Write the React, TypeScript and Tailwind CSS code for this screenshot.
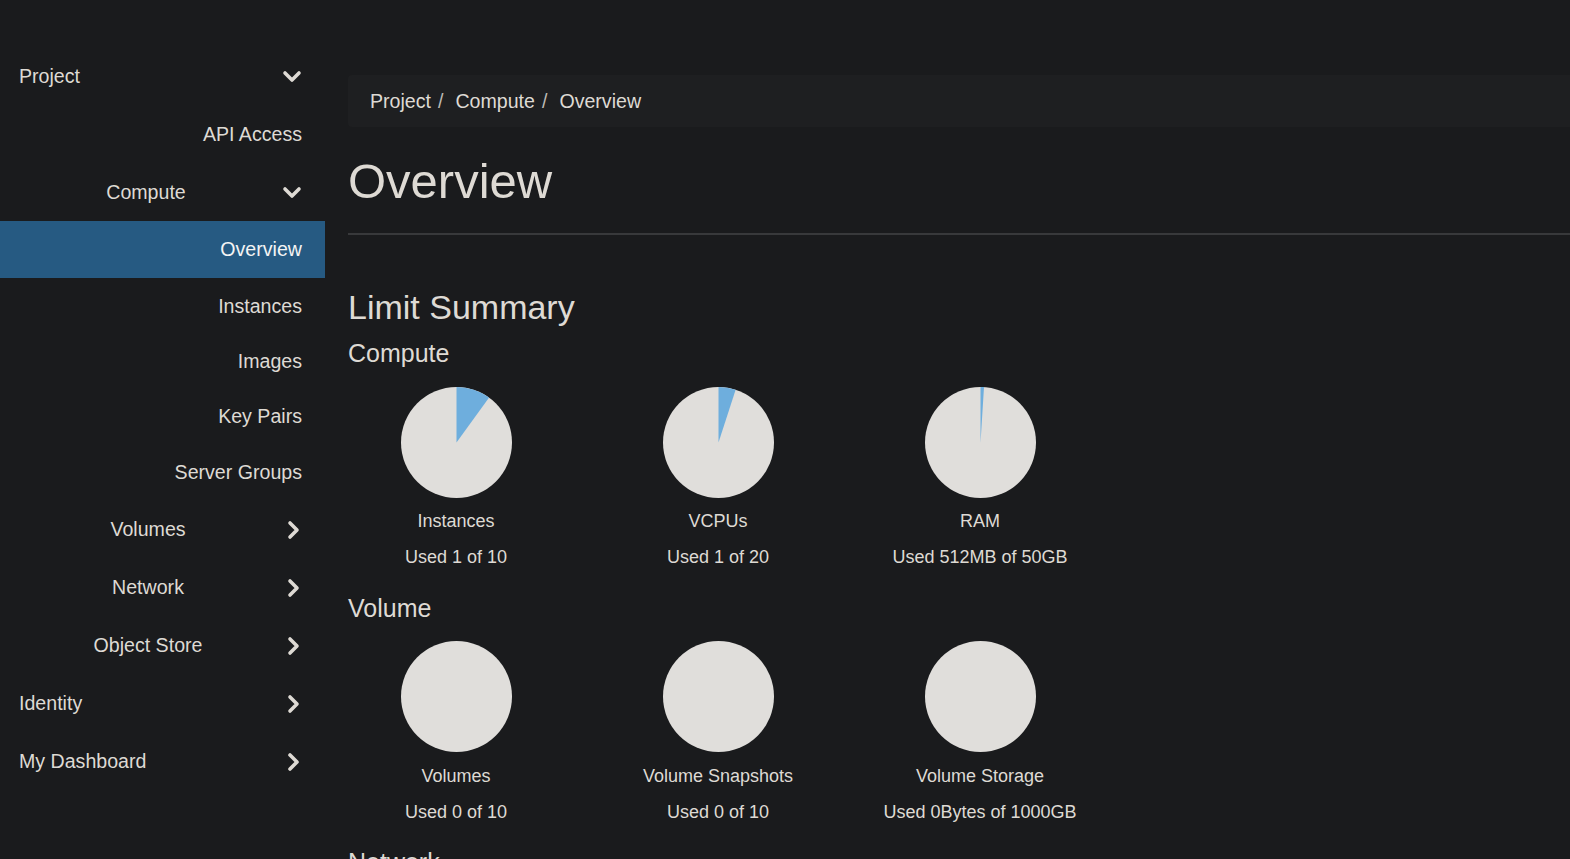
import React from 'react';

const font = "font-['Liberation_Sans',Arial,Helvetica,sans-serif]";

function ChevronDown() {
  return (
    <svg width="20" height="14" viewBox="0 0 20 14" className="shrink-0">
      <polyline points="3,3 10,10 17,3" fill="none" stroke="#dedad4" strokeWidth="3.6" strokeLinecap="round" strokeLinejoin="round" />
    </svg>
  );
}

function ChevronRight() {
  return (
    <svg width="14" height="20" viewBox="0 0 14 20" className="shrink-0 mr-[2px]">
      <polyline points="4,3 11,10 4,17" fill="none" stroke="#dedad4" strokeWidth="3.6" strokeLinecap="round" strokeLinejoin="round" />
    </svg>
  );
}

type Item =
  | { kind: 'top'; label: string; open: boolean; h: string }
  | { kind: 'group'; label: string; open: boolean; h: string }
  | { kind: 'leaf'; label: string; active?: boolean; h: string };

const nav: Item[] = [
  { kind: 'top', label: 'Project', open: true, h: 'h-[58px]' },
  { kind: 'leaf', label: 'API Access', h: 'h-[58px]' },
  { kind: 'group', label: 'Compute', open: true, h: 'h-[58px]' },
  { kind: 'leaf', label: 'Overview', active: true, h: 'h-[57px]' },
  { kind: 'leaf', label: 'Instances', h: 'h-[55px]' },
  { kind: 'leaf', label: 'Images', h: 'h-[55px]' },
  { kind: 'leaf', label: 'Key Pairs', h: 'h-[56px]' },
  { kind: 'leaf', label: 'Server Groups', h: 'h-[56px]' },
  { kind: 'group', label: 'Volumes', open: false, h: 'h-[58px]' },
  { kind: 'group', label: 'Network', open: false, h: 'h-[58px]' },
  { kind: 'group', label: 'Object Store', open: false, h: 'h-[58px]' },
  { kind: 'top', label: 'Identity', open: false, h: 'h-[58px]' },
  { kind: 'top', label: 'My Dashboard', open: false, h: 'h-[58px]' },
];

function Sidebar() {
  return (
    <nav className="w-[325px] shrink-0 pt-[48px] text-[19.6px] text-[#dedad4]">
      {nav.map((item) => {
        if (item.kind === 'leaf') {
          return (
            <div
              key={item.label}
              className={`${item.h} flex items-center justify-end pr-[23px] ${
                item.active ? 'bg-[#265a82] text-[#f4f4f4] -mt-[1px] mb-[1px]' : ''
              }`}
            >
              {item.label}
            </div>
          );
        }
        return (
          <div key={item.label} className={`${item.h} flex items-center pl-[19px] pr-[23px]`}>
            <span className={`flex-1 ${item.kind === 'group' ? 'text-center pr-[9px]' : ''}`}>{item.label}</span>
            {item.open ? <ChevronDown /> : <ChevronRight />}
          </div>
        );
      })}
    </nav>
  );
}

function Pie({ used }: { used: number }) {
  const r = 55.5;
  const c = 55.5;
  const a = used * 2 * Math.PI;
  const x = c + r * Math.sin(a);
  const y = c - r * Math.cos(a);
  const large = used > 0.5 ? 1 : 0;
  return (
    <svg width="111" height="111" viewBox="0 0 111 111">
      <circle cx={c} cy={c} r={r} fill="#e0dedb" />
      {used > 0 && (
        <path d={`M${c},${c} L${c},${c - r} A${r},${r} 0 ${large} 1 ${x},${y} Z`} fill="#6eaedd" />
      )}
    </svg>
  );
}

type Chart = { title: string; used: number; text: string };

function ChartRow({ charts, labelGap }: { charts: Chart[]; labelGap: string }) {
  return (
    <div className="flex gap-[46px] mt-[19px]">
      {charts.map((ch) => (
        <div key={ch.title} className="w-[216px] flex flex-col items-center text-[18px] leading-[25px]">
          <Pie used={ch.used} />
          <div className={labelGap}>{ch.title}</div>
          <div className="mt-[11px] whitespace-nowrap">{ch.text}</div>
        </div>
      ))}
    </div>
  );
}

export default function App() {
  return (
    <div className={`h-[859px] overflow-hidden bg-[#1a1b1d] text-[#dedad4] flex ${font}`}>
      <Sidebar />

      <main className="flex-1 min-w-0 ml-[23px] pt-[75px]">
        {/* Breadcrumb */}
        <div className="h-[52px] rounded-l-[4px] bg-[#1e1f21] flex items-center pl-[22px] pt-[2px] text-[19.6px]">
          <span>Project</span>
          <span className="ml-[7px] mr-[12px] text-[#bdbab5]">/</span>
          <span>Compute</span>
          <span className="ml-[7px] mr-[12px] text-[#bdbab5]">/</span>
          <span>Overview</span>
        </div>

        <h1 className="mt-[28px] text-[49px] leading-[1.1]">Overview</h1>
        <div className="mt-[24px] h-[2px] bg-[#38393b]" />

        <h2 className="mt-[54px] text-[34px] leading-[1.1]">Limit Summary</h2>

        <h4 className="mt-[14px] text-[25px] leading-[1.1]">Compute</h4>
        <ChartRow
          labelGap="mt-[11px]"
          charts={[
            { title: 'Instances', used: 0.1, text: 'Used 1 of 10' },
            { title: 'VCPUs', used: 0.05, text: 'Used 1 of 20' },
            { title: 'RAM', used: 0.01, text: 'Used 512MB of 50GB' },
          ]}
        />

        <h4 className="mt-[25px] text-[25px] leading-[1.1]">Volume</h4>
        <ChartRow
          labelGap="mt-[12px]"
          charts={[
            { title: 'Volumes', used: 0, text: 'Used 0 of 10' },
            { title: 'Volume Snapshots', used: 0, text: 'Used 0 of 10' },
            { title: 'Volume Storage', used: 0, text: 'Used 0Bytes of 1000GB' },
          ]}
        />

        <h4 className="mt-[24px] text-[25px] leading-[1.1]">Network</h4>
      </main>
    </div>
  );
}
